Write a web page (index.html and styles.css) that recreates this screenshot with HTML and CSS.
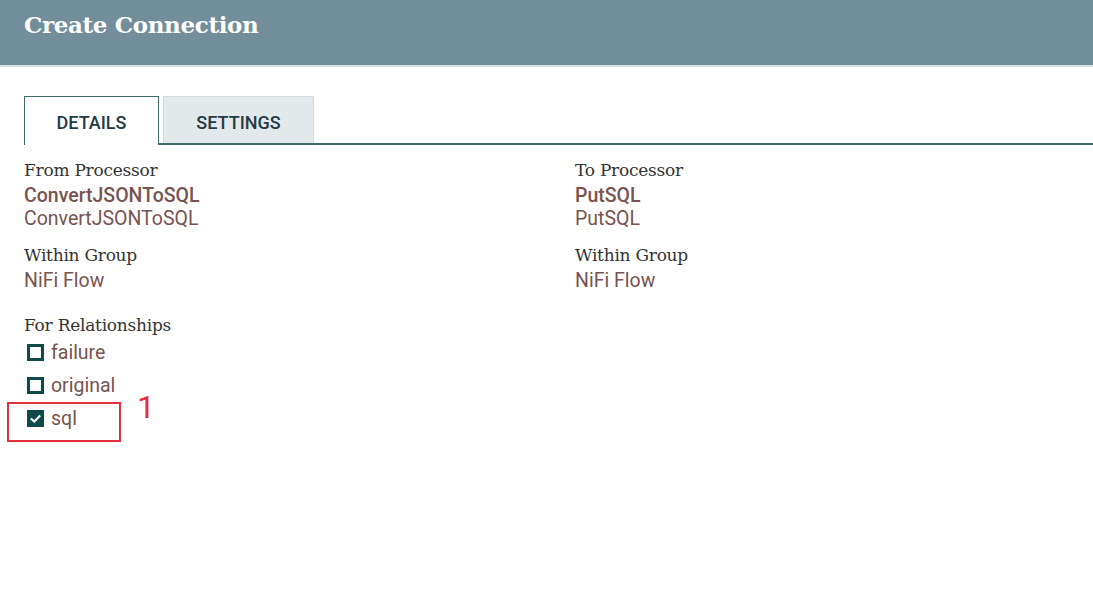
FILE: index.html
```html
<!DOCTYPE html>
<html lang="en">
<head>
<meta charset="utf-8">
<title>Create Connection</title>
<link rel="stylesheet" href="styles.css">
</head>
<body>
<header class="dialog-header">
  <h1 class="dialog-title">Create Connection</h1>
</header>
<main class="dialog-body">
  <nav class="tabs">
    <div class="tab tab-active">DETAILS</div>
    <div class="tab tab-inactive">SETTINGS</div>
  </nav>
  <section class="details">
    <div class="column">
      <div class="field">
        <div class="label">From Processor</div>
        <div class="value value-strong">ConvertJSONToSQL</div>
        <div class="value">ConvertJSONToSQL</div>
      </div>
      <div class="field">
        <div class="label">Within Group</div>
        <div class="value">NiFi Flow</div>
      </div>
      <div class="field field-rel">
        <div class="label">For Relationships</div>
        <ul class="rels">
          <li class="rel">
            <span class="checkbox"></span>
            <span class="rel-name">failure</span>
          </li>
          <li class="rel">
            <span class="checkbox"></span>
            <span class="rel-name">original</span>
          </li>
          <li class="rel rel-marked">
            <span class="checkbox checked">
              <svg viewBox="0 0 16 16" width="14" height="14"><path d="M2.2 8.2 L6.2 11.8 L13.8 4.0" fill="none" stroke="#fff" stroke-width="3" stroke-linecap="square"/></svg>
            </span>
            <span class="rel-name">sql</span>
            <span class="annot-box"></span>
            <span class="annot-num">1</span>
          </li>
        </ul>
      </div>
    </div>
    <div class="column">
      <div class="field">
        <div class="label">To Processor</div>
        <div class="value value-strong">PutSQL</div>
        <div class="value">PutSQL</div>
      </div>
      <div class="field">
        <div class="label">Within Group</div>
        <div class="value">NiFi Flow</div>
      </div>
    </div>
  </section>
</main>
</body>
</html>
```
FILE: styles.css
```css
html, body {
  margin: 0;
  padding: 0;
  background: #ffffff;
}
body {
  font-family: Roboto, "Liberation Sans", sans-serif;
  color: #262626;
}
.dialog-header {
  height: 67px;
  background: #728e9b;
  border-bottom: 2px solid #d9e1e5;
  padding-left: 24px;
  box-sizing: border-box;
}
.dialog-title {
  margin: 0;
  font-family: "DejaVu Serif", serif;
  font-weight: bold;
  font-size: 23px;
  line-height: 50px;
  color: #ffffff;
  letter-spacing: -0.35px;
}
.dialog-body {
  padding: 0 0 0 24px;
}
.tabs {
  margin-top: 29px;
  display: flex;
  align-items: flex-end;
  border-bottom: 2px solid #3f6c6c;
  height: 47px;
}
.tab {
  font-family: Roboto, sans-serif;
  font-weight: 500;
  font-size: 18px;
  color: #243a45;
  display: flex;
  align-items: center;
  justify-content: center;
  box-sizing: border-box;
}
.tab-active {
  width: 135px;
  height: 49px;
  margin-bottom: -2px;
  background: #fff;
  border: 1.5px solid #3f6c6c;
  border-bottom: none;
  padding-top: 2px;
}
.tab-inactive {
  width: 151px;
  height: 47px;
  margin-left: 4px;
  background: #e3e8eb;
  border: 1px solid #d2dde1;
  border-bottom: none;
  padding-top: 4px;
}
.details {
  display: grid;
  grid-template-columns: 551px 1fr;
  margin-top: 13px;
}
.field {
  margin-bottom: 13px;
}
.label {
  font-family: "DejaVu Serif", serif;
  font-size: 17px;
  line-height: 24px;
  color: #333333;
  letter-spacing: -0.25px;
  margin-bottom: 2px;
}
.value {
  font-family: Roboto, sans-serif;
  font-size: 19.5px;
  line-height: 23px;
  color: #775351;
}
.value-strong {
  font-weight: 500;
}
.field-rel {
  margin-top: 21px;
}
.field-rel .label {
  margin-bottom: -1px;
}
.rels {
  list-style: none;
  margin: 0;
  padding: 0;
}
.rel {
  position: relative;
  display: flex;
  align-items: center;
  height: 33px;
  margin-left: 3px;
}
.checkbox {
  width: 17px;
  height: 17px;
  box-sizing: border-box;
  border: 3px solid #0f4a4b;
  margin-right: 7px;
  display: flex;
  align-items: center;
  justify-content: center;
}
.checkbox.checked {
  background: #0f4a4b;
  border-color: #0f4a4b;
}
.rel-name {
  font-family: Roboto, sans-serif;
  font-size: 19.5px;
  color: #775351;
}
.annot-box {
  position: absolute;
  left: -20px;
  top: 0;
  width: 114px;
  height: 40px;
  box-sizing: border-box;
  border: 2px solid #e3303a;
}
.annot-num {
  position: absolute;
  left: 110px;
  top: -14px;
  font-family: Roboto, sans-serif;
  font-weight: 400;
  font-size: 32px;
  color: #e3303a;
}
```
